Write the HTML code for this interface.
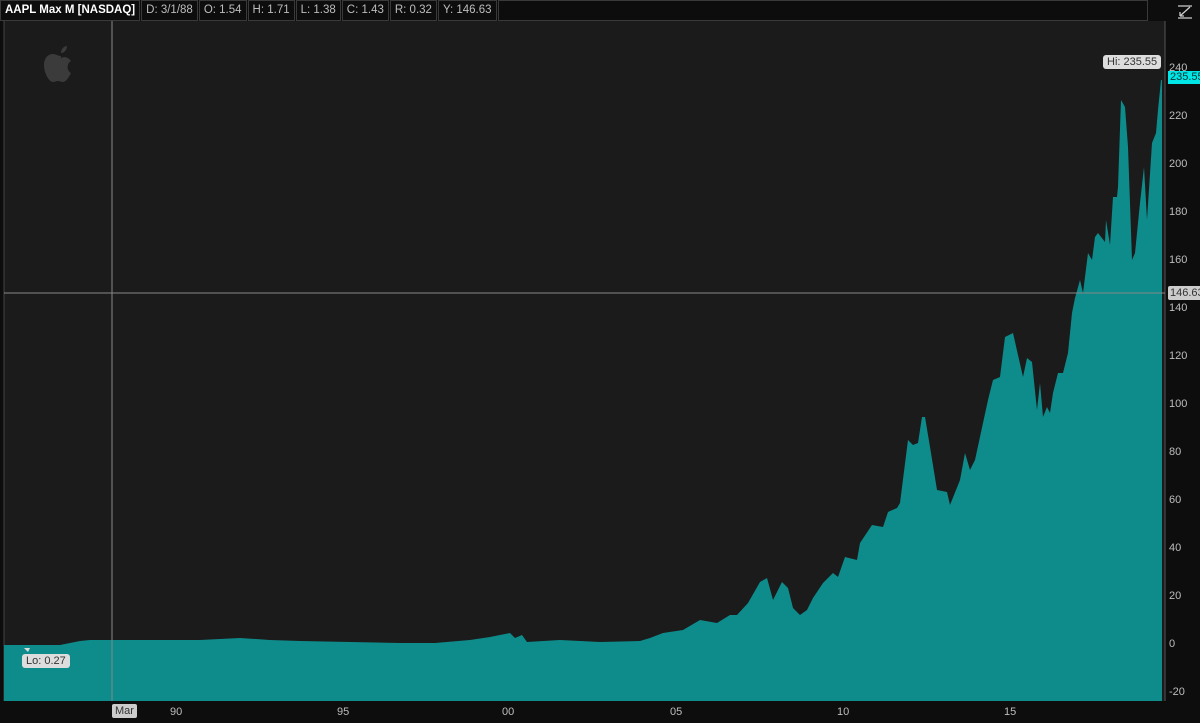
<!DOCTYPE html>
<html><head><meta charset="utf-8"><style>
html,body{margin:0;padding:0;background:#0d0d0d;width:1200px;height:723px;overflow:hidden;font-family:"Liberation Sans",sans-serif}
.hdr{position:absolute;top:0;left:0;height:21px;display:flex}
.hdr div{height:19px;line-height:19px;font-size:11.5px;color:#bdbdbd;border:1px solid #3a3a3a;padding:0 4px;background:#0d0d0d;margin-right:1px}
.hdr div.t{color:#fff;font-weight:bold}
.yl{position:absolute;left:1169px;font-size:11px;color:#bdbdbd}
.xl{position:absolute;top:706px;font-size:11px;color:#bdbdbd}
.tag{position:absolute;font-size:11px;color:#333;background:#ddd;border-radius:3px;padding:0 4px;line-height:14px}
</style></head><body>
<div class="hdr">
<div class="t">AAPL Max M [NASDAQ]</div><div>D: 3/1/88</div><div>O: 1.54</div><div>H: 1.71</div><div>L: 1.38</div><div>C: 1.43</div><div>R: 0.32</div><div>Y: 146.63</div><div style="width:640px"></div>
</div>
<svg style="position:absolute;left:0;top:0" width="1200" height="723">
<rect x="4" y="21" width="1161" height="680" fill="#1b1b1b"/>
<line x1="4" y1="21" x2="4" y2="701" stroke="#444"/>
<line x1="1165" y1="21" x2="1165" y2="701" stroke="#555"/>
<path fill="#0e8c8c" d="M4,701 L4,645 60,645 80,641 90,640 150,640 200,640 240,638 270,640 300,641 350,642 400,643 435,643 470,640 490,637 505,634 510,633 515,638 522,635 527,642 560,640 600,642 640,641 650,638 663,633 683,630 700,620 717,623 730,615 737,615 748,603 760,582 767,578 773,600 782,582 788,588 793,608 800,615 807,610 813,598 823,583 833,573 838,577 845,557 857,560 860,543 872,525 883,527 888,512 897,508 900,503 908,440 913,445 918,443 922,417 925,417 930,447 937,490 947,492 950,505 960,480 965,453 970,470 975,460 983,423 988,400 993,380 1000,377 1005,337 1013,333 1023,377 1027,358 1032,362 1037,410 1040,383 1043,417 1047,407 1050,413 1053,393 1058,373 1063,373 1068,353 1072,313 1075,298 1080,280 1083,293 1088,253 1092,260 1095,237 1098,233 1105,242 1106,220 1110,245 1113,197 1117,197 1118,187 1121,100 1125,107 1128,147 1132,260 1135,253 1140,203 1144,167 1147,220 1152,143 1156,133 1158,110 1161,80 1162,80 1162,701 Z"/>
<line x1="112" y1="21" x2="112" y2="701" stroke="#888" stroke-width="1"/>
<line x1="4" y1="293" x2="1165" y2="293" stroke="#888" stroke-width="1"/>
<path d="M61,56c-3,0-5,-2-8,-2c-5,0-9,4-9,11c0,8 5,17 9,17c2,0 3,-1 5,-1s3,1 5,1c3,0 6,-5 8,-9c-4,-2-5,-9 0,-12c-2,-3-5,-4-7,-4c-1,0-2,1-3,1z M61,53c0,-4 3,-7 6,-7c0,4-3,7-6,7z" fill="#3b3b3b"/>
<path d="M1178,6h14M1178,18h14M1180,16l10-9M1180,16v-4M1180,16h4" stroke="#ccc" stroke-width="1.3" fill="none"/>
<path d="M1152,68l6,0-3,-4z" fill="#ddd"/>
<path d="M28,652l-4,-4 6,0z" fill="#ddd"/>
</svg>
<div class="tag" style="left:1103px;top:55px">Hi: 235.55</div>
<div class="tag" style="left:22px;top:654px">Lo: 0.27</div>
<div class="yl" style="top:62px">240</div>
<div class="yl" style="top:110px">220</div>
<div class="yl" style="top:158px">200</div>
<div class="yl" style="top:206px">180</div>
<div class="yl" style="top:254px">160</div>
<div class="yl" style="top:302px">140</div>
<div class="yl" style="top:350px">120</div>
<div class="yl" style="top:398px">100</div>
<div class="yl" style="top:446px">80</div>
<div class="yl" style="top:494px">60</div>
<div class="yl" style="top:542px">40</div>
<div class="yl" style="top:590px">20</div>
<div class="yl" style="top:638px">0</div>
<div class="yl" style="top:686px">-20</div>
<div style="position:absolute;left:1168px;top:71px;background:#00e5e5;color:#033;font-size:11px;line-height:13px;padding:0 2px;width:30px;overflow:hidden">235.55</div>
<div style="position:absolute;left:1168px;top:286px;background:#ccc;color:#333;font-size:11px;line-height:14px;padding:0 2px;width:30px;overflow:hidden;border-radius:2px">146.63</div>
<div class="xl" style="left:112px;top:704px;background:#ccc;color:#333;padding:0 3px;border-radius:2px;line-height:14px">Mar</div>
<div class="xl" style="left:170px">90</div>
<div class="xl" style="left:337px">95</div>
<div class="xl" style="left:502px">00</div>
<div class="xl" style="left:670px">05</div>
<div class="xl" style="left:837px">10</div>
<div class="xl" style="left:1004px">15</div>
</body></html>
